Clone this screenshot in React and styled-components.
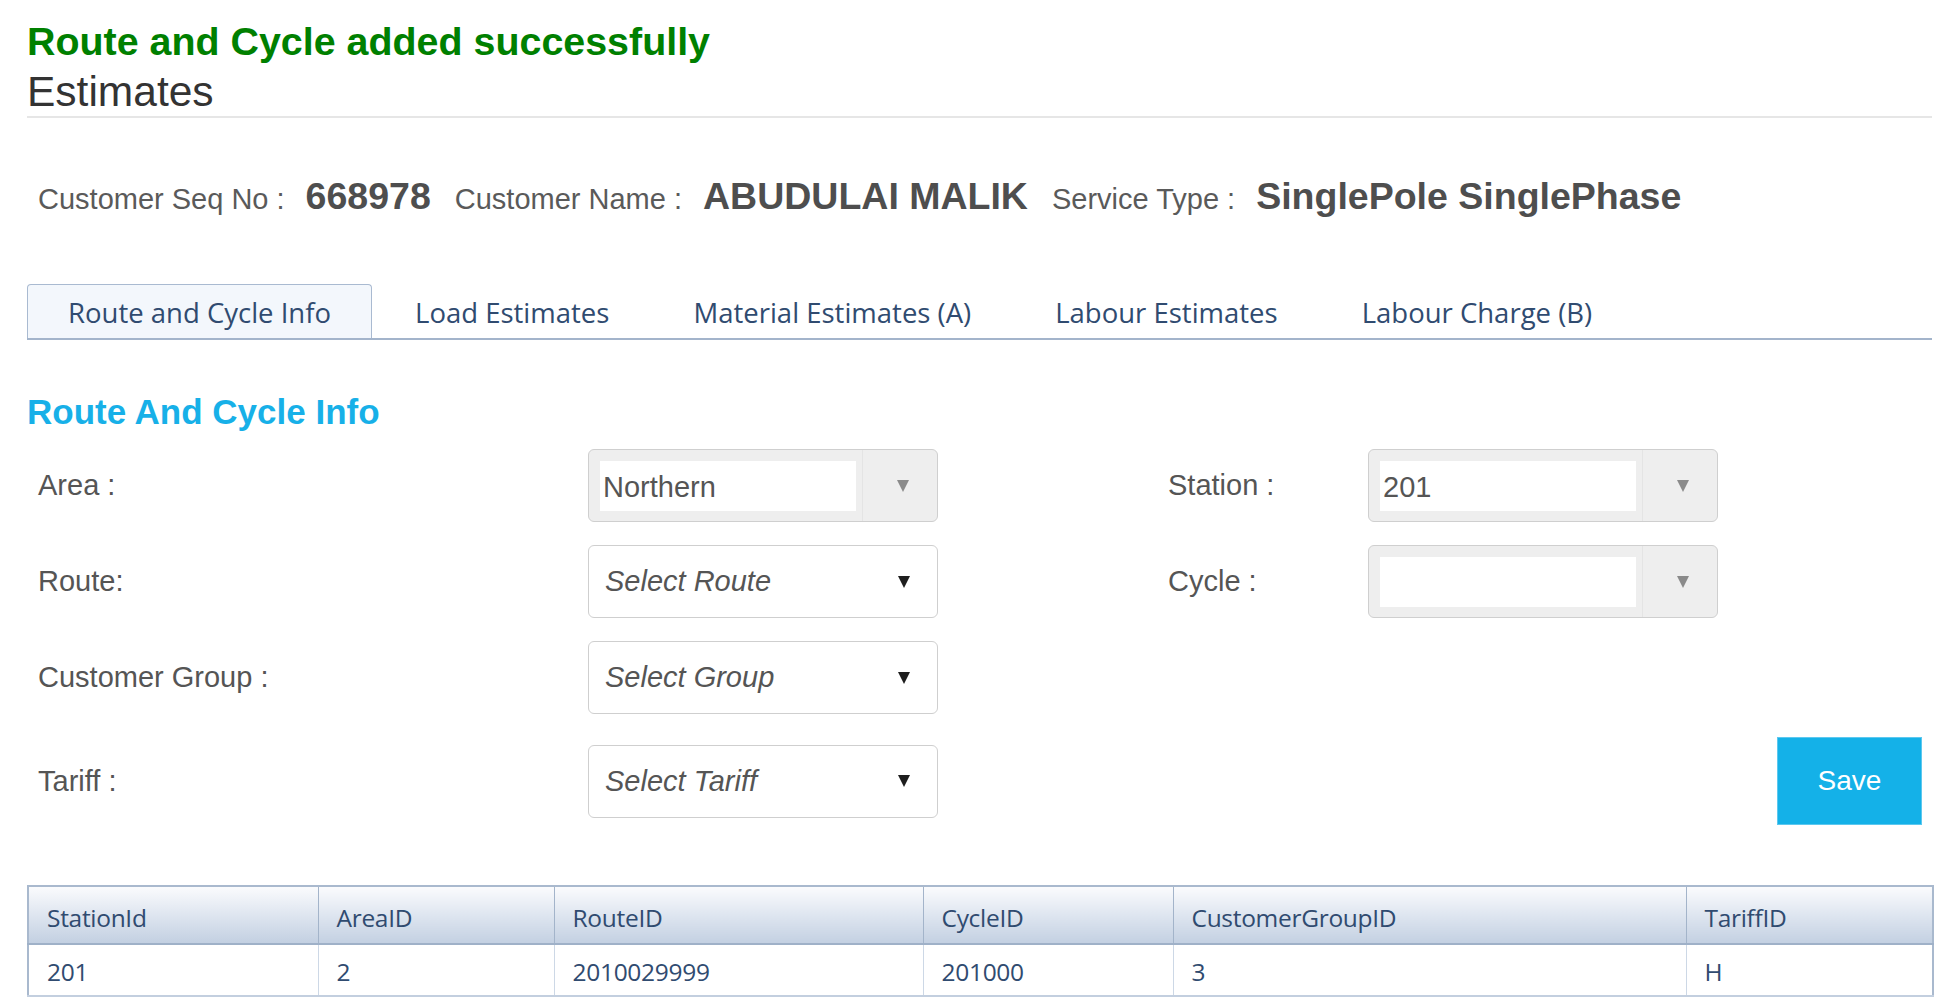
import React from "react";
import styled, { createGlobalStyle } from "styled-components";

const GlobalStyle = createGlobalStyle`
  html, body { margin: 0; padding: 0; background: #ffffff; }
  body { font-family: "Liberation Sans", Arial, sans-serif; color: #555555; }
  * { box-sizing: border-box; }
`;

const Page = styled.div`
  width: 1948px;
  padding: 19px 16px 0 27px;
`;

const Success = styled.div`
  font-size: 39.4px;
  font-weight: 700;
  line-height: 44px;
  color: #008000;
`;

const Title = styled.h1`
  margin: 5px 0 0;
  font-size: 42.5px;
  font-weight: 400;
  line-height: 48px;
  color: #333333;
  border-bottom: 2px solid #e6e6e6;
`;

const InfoLine = styled.div`
  display: flex;
  align-items: baseline;
  margin-top: 56px;
  padding-left: 11px;
`;

const InfoLabel = styled.span`
  font-size: 29px;
  line-height: 1.2;
  color: #5a5a5a;
  margin-right: 21px;
`;

const InfoValue = styled.span`
  font-size: 37.5px;
  font-weight: 700;
  line-height: 1.2;
  color: #4e4e4e;
  margin-right: 24px;
`;

const Tabs = styled.div`
  display: flex;
  margin-top: 65px;
  border-bottom: 2px solid #a3b4cb;
`;

const Tab = styled.div`
  height: 54px;
  line-height: 54px;
  padding: 1px 40px 0;
  margin-right: 2px;
  font-family: "Open Sans", "Noto Sans", sans-serif;
  font-size: 27.5px;
  color: #304b70;
  border: 1px solid ${(p) => (p.$active ? "#a9bad1" : "transparent")};
  border-bottom: 0;
  border-radius: 4px 4px 0 0;
  background: ${(p) => (p.$active ? "#f3f7fc" : "transparent")};
`;

const SectionTitle = styled.h2`
  margin: 52px 0 0;
  font-size: 35px;
  font-weight: 700;
  line-height: 40px;
  color: #17b0e8;
`;

const FormGrid = styled.div`
  display: grid;
  grid-template-columns: 550px 350px 230px 200px 350px 1fr;
  row-gap: 23px;
  align-items: center;
  margin-top: 17px;
  padding: 0 10px 0 11px;
`;

const Label = styled.div`
  font-size: 29px;
  line-height: 1.2;
  color: #555555;
`;

const SelectBox = styled.div`
  display: flex;
  align-items: center;
  height: 73px;
  border: 1px solid #cfcfcf;
  border-radius: 6px;
  background: ${(p) => (p.$disabled ? "#eeeeee" : "#ffffff")};
  padding-left: ${(p) => (p.$disabled ? "11px" : "16px")};
`;

const InnerValue = styled.div`
  width: 256px;
  height: 50px;
  background: #ffffff;
  padding-left: 3px;
  font-size: 29px;
  line-height: 52px;
  color: #555555;
`;

const Placeholder = styled.div`
  flex: 1;
  font-size: 29px;
  font-style: italic;
  color: #555555;
`;

const ArrowZone = styled.div`
  align-self: stretch;
  width: 74px;
  margin-left: ${(p) => (p.$disabled ? "6px" : "auto")};
  padding-left: 6px;
  display: flex;
  align-items: center;
  justify-content: center;
  border-left: 1px solid ${(p) => (p.$disabled ? "#e4e4e4" : "transparent")};
`;

const Arrow = styled.span`
  width: 0;
  height: 0;
  border-left: 6.5px solid transparent;
  border-right: 6.5px solid transparent;
  border-top: 12px solid ${(p) => (p.$disabled ? "#8a8a8a" : "#1e1e1e")};
`;

const SaveButton = styled.button`
  grid-column: 6;
  justify-self: end;
  width: 145px;
  height: 88px;
  background: #14b1e8;
  border: 1px solid #5cc8ef;
  color: #ffffff;
  font-family: "Liberation Sans", Arial, sans-serif;
  font-size: 28px;
  cursor: pointer;
`;

const Table = styled.table`
  margin-top: 60px;
  width: 1905px;
  table-layout: fixed;
  border-collapse: collapse;
  border: 2px solid #a9b9ce;
  font-family: "Open Sans", "Noto Sans", sans-serif;
  font-size: 24.5px;
  letter-spacing: -0.3px;
  color: #304b70;
`;

const Col = styled.col`
  width: ${(p) => p.$w}px;
`;

const Th = styled.th`
  height: 58px;
  padding: 4px 18px 0;
  text-align: left;
  font-weight: 400;
  border: 1px solid #a3b4ca;
  border-bottom: 2px solid #9fb1c8;
  background: linear-gradient(#fafbfd, #c3d0e2);
`;

const Td = styled.td`
  height: 52px;
  padding: 2px 18px 0;
  border: 1px solid #cdd8e6;
  border-bottom: 2px solid #c3cfdf;
`;

function Select({ value, placeholder, disabled }) {
  return (
    <SelectBox $disabled={disabled}>
      {disabled ? (
        <InnerValue>{value}</InnerValue>
      ) : (
        <Placeholder>{placeholder}</Placeholder>
      )}
      <ArrowZone $disabled={disabled}>
        <Arrow $disabled={disabled} />
      </ArrowZone>
    </SelectBox>
  );
}

const tabs = [
  "Route and Cycle Info",
  "Load Estimates",
  "Material Estimates (A)",
  "Labour Estimates",
  "Labour Charge (B)",
];

const columns = [
  ["StationId", 290],
  ["AreaID", 236],
  ["RouteID", 369],
  ["CycleID", 250],
  ["CustomerGroupID", 513],
  ["TariffID", 247],
];

const row = ["201", "2", "2010029999", "201000", "3", "H"];

export default function App() {
  return (
    <>
      <GlobalStyle />
      <Page>
        <Success>Route and Cycle added successfully</Success>
        <Title>Estimates</Title>

        <InfoLine>
          <InfoLabel>Customer Seq No :</InfoLabel>
          <InfoValue>668978</InfoValue>
          <InfoLabel>Customer Name :</InfoLabel>
          <InfoValue>ABUDULAI MALIK</InfoValue>
          <InfoLabel>Service Type :</InfoLabel>
          <InfoValue>SinglePole SinglePhase</InfoValue>
        </InfoLine>

        <Tabs>
          {tabs.map((t, i) => (
            <Tab key={t} $active={i === 0}>
              {t}
            </Tab>
          ))}
        </Tabs>

        <SectionTitle>Route And Cycle Info</SectionTitle>

        <FormGrid>
          <Label>Area :</Label>
          <Select disabled value="Northern" />
          <div />
          <Label>Station :</Label>
          <Select disabled value="201" />
          <div />

          <Label>Route:</Label>
          <Select placeholder="Select Route" />
          <div />
          <Label>Cycle :</Label>
          <Select disabled value="" />
          <div />

          <Label>Customer Group :</Label>
          <Select placeholder="Select Group" />
          <div />
          <div />
          <div />
          <div />

          <Label>Tariff :</Label>
          <Select placeholder="Select Tariff" />
          <SaveButton type="button">Save</SaveButton>
        </FormGrid>

        <Table>
          <colgroup>
            {columns.map(([name, w]) => (
              <Col key={name} $w={w} />
            ))}
          </colgroup>
          <thead>
            <tr>
              {columns.map(([name]) => (
                <Th key={name}>{name}</Th>
              ))}
            </tr>
          </thead>
          <tbody>
            <tr>
              {row.map((v, i) => (
                <Td key={i}>{v}</Td>
              ))}
            </tr>
          </tbody>
        </Table>
      </Page>
    </>
  );
}
